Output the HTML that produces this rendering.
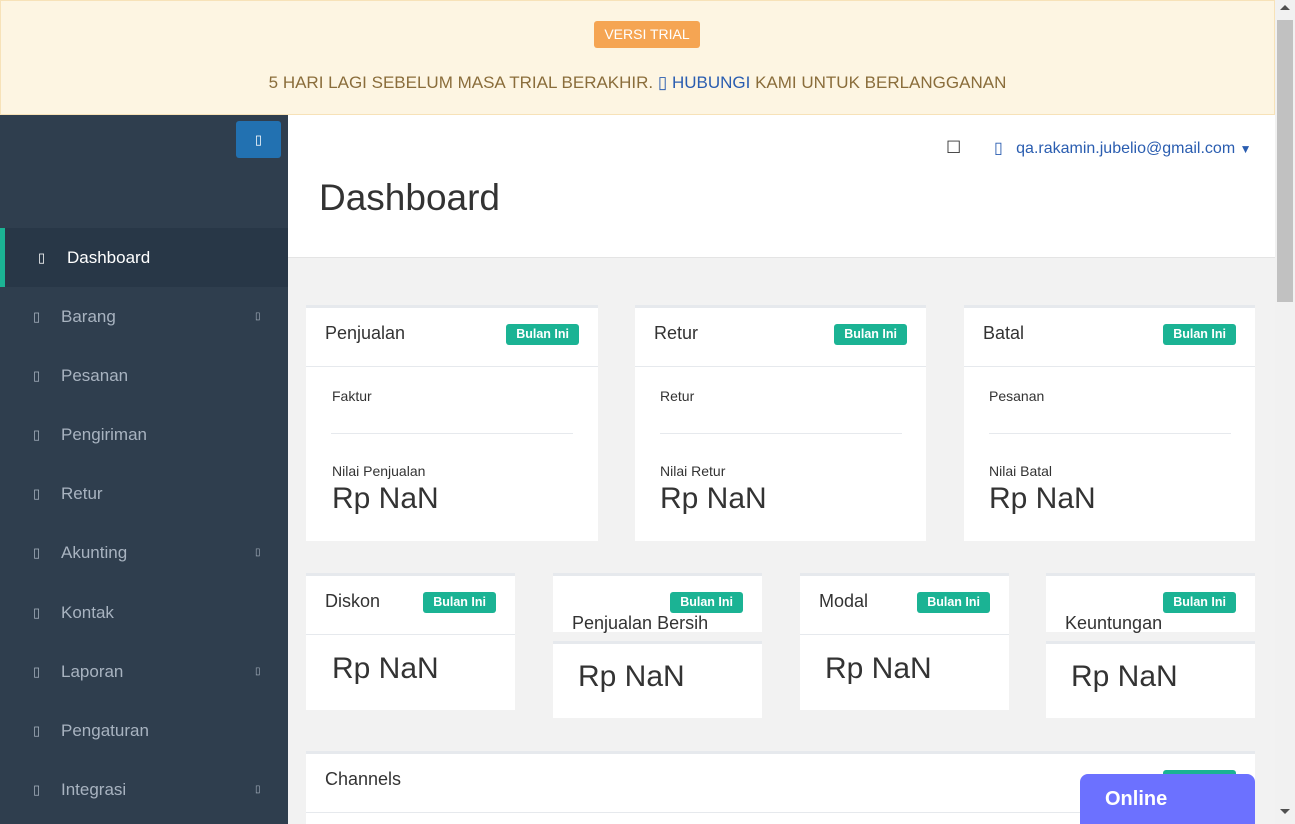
<!DOCTYPE html>
<html><head><meta charset="utf-8"><style>
*{box-sizing:border-box;margin:0;padding:0}
html,body{width:1295px;height:824px;overflow:hidden}
body{font-family:"Liberation Sans",sans-serif;background:#f2f2f2;position:relative}
.ban{position:absolute;left:0;top:0;width:1275px;height:115px;background:#fdf5e2;border:1px solid #f7e2b8;text-align:center}
.vt{position:absolute;left:593px;top:20px;width:106px;height:27px;background:#f5a553;color:#fff;font-size:14px;line-height:27px;border-radius:3px}
.bt{position:absolute;left:0;right:0;top:72px;font-size:17px;color:#8a6d3b}
.bt span{color:#2a5db0}
.sb{position:absolute;left:0;top:115px;width:288px;height:709px;background:#2f3e4e}
.tog{position:absolute;left:236px;top:121px;width:45px;height:37px;background:#2271b1;border-radius:3px;color:#fff;font-size:13px;text-align:center;line-height:37px}
.nav{position:absolute;left:0;width:288px;height:59px;color:#a8b3c0;font-size:17px;line-height:59px}
.nav i{position:absolute;left:33px;font-style:normal;font-size:13px}
.nav b{position:absolute;left:61px;font-weight:normal}
.nav u{position:absolute;left:255px;text-decoration:none;font-size:10px}
.act{background:#283747;color:#fff;border-left:5px solid #1bb394}
.hd{position:absolute;left:288px;top:115px;width:987px;height:143px;background:#fff;border-bottom:1px solid #e4e4e4}
.card{position:absolute;background:#fff;border-top:3px solid #e6e9ed}
.ch{height:59px;border-bottom:1px solid #e6e9ed;position:relative;font-size:18px;color:#333;padding:15px 0 0 19px}
.bd{position:absolute;right:19px;top:16px;background:#1bb394;color:#fff;font-size:12.5px;font-weight:bold;padding:3px 10px;border-radius:3px;line-height:15px}
.lab{position:absolute;font-size:14px;color:#333}
.big{position:absolute;font-size:30px;color:#333}
.sc{position:absolute;left:1275px;top:0;width:20px;height:824px;background:#f1f1f1}
</style></head><body>
<div class="ban"><div class="vt">VERSI TRIAL</div><div class="bt">5 HARI LAGI SEBELUM MASA TRIAL BERAKHIR. <span>▯ HUBUNGI</span> KAMI UNTUK BERLANGGANAN</div></div>
<div class="sb"></div>
<div class="tog">▯</div>
<div class="nav act" style="top:228px"><i>▯</i><b style="left:62px">Dashboard</b></div>
<div class="nav" style="top:287px"><i>▯</i><b>Barang</b><u>▯</u></div>
<div class="nav" style="top:346px"><i>▯</i><b>Pesanan</b></div>
<div class="nav" style="top:405px"><i>▯</i><b>Pengiriman</b></div>
<div class="nav" style="top:464px"><i>▯</i><b>Retur</b></div>
<div class="nav" style="top:523px"><i>▯</i><b>Akunting</b><u>▯</u></div>
<div class="nav" style="top:583px"><i>▯</i><b>Kontak</b></div>
<div class="nav" style="top:642px"><i>▯</i><b>Laporan</b><u>▯</u></div>
<div class="nav" style="top:701px"><i>▯</i><b>Pengaturan</b></div>
<div class="nav" style="top:760px"><i>▯</i><b>Integrasi</b><u>▯</u></div>
<div class="hd">
<div style="position:absolute;left:658px;top:23px;font-size:17px;color:#333">☐</div>
<div style="position:absolute;left:706px;top:23px;font-size:16px;color:#2a5db0">▯ &nbsp;&nbsp;qa.rakamin.jubelio@gmail.com <span style="font-size:12px">▼</span></div>
<div style="position:absolute;left:31px;top:62px;font-size:37px;color:#333">Dashboard</div>
</div>

<div class="card" style="left:306px;top:305px;width:292px;height:236px"><div class="ch">Penjualan<span class="bd">Bulan Ini</span></div>
<div class="lab" style="left:26px;top:80px">Faktur</div><div style="position:absolute;left:25px;top:125px;width:242px;border-top:1px solid #e6e9ed"></div>
<div class="lab" style="left:26px;top:155px">Nilai Penjualan</div><div class="big" style="left:26px;top:174px">Rp NaN</div></div>
<div class="card" style="left:635px;top:305px;width:291px;height:236px"><div class="ch">Retur<span class="bd">Bulan Ini</span></div>
<div class="lab" style="left:25px;top:80px">Retur</div><div style="position:absolute;left:25px;top:125px;width:242px;border-top:1px solid #e6e9ed"></div>
<div class="lab" style="left:25px;top:155px">Nilai Retur</div><div class="big" style="left:25px;top:174px">Rp NaN</div></div>
<div class="card" style="left:964px;top:305px;width:291px;height:236px"><div class="ch">Batal<span class="bd">Bulan Ini</span></div>
<div class="lab" style="left:25px;top:80px">Pesanan</div><div style="position:absolute;left:25px;top:125px;width:242px;border-top:1px solid #e6e9ed"></div>
<div class="lab" style="left:25px;top:155px">Nilai Batal</div><div class="big" style="left:25px;top:174px">Rp NaN</div></div>

<div class="card" style="left:306px;top:573px;width:209px;height:137px"><div class="ch">Diskon<span class="bd">Bulan Ini</span></div><div class="big" style="left:26px;top:76px">Rp NaN</div></div>
<div class="card" style="left:553px;top:573px;width:209px;height:59px"><span class="bd">Bulan Ini</span><div style="position:absolute;left:19px;top:37px;font-size:18px;color:#333">Penjualan Bersih</div></div>
<div class="card" style="left:553px;top:641px;width:209px;height:77px"><div class="big" style="left:25px;top:16px">Rp NaN</div></div>
<div class="card" style="left:800px;top:573px;width:209px;height:137px"><div class="ch">Modal<span class="bd">Bulan Ini</span></div><div class="big" style="left:25px;top:76px">Rp NaN</div></div>
<div class="card" style="left:1046px;top:573px;width:209px;height:59px"><span class="bd">Bulan Ini</span><div style="position:absolute;left:19px;top:37px;font-size:18px;color:#333">Keuntungan</div></div>
<div class="card" style="left:1046px;top:641px;width:209px;height:77px"><div class="big" style="left:25px;top:16px">Rp NaN</div></div>

<div class="card" style="left:306px;top:751px;width:949px;height:73px"><div class="ch">Channels<span class="bd">Bulan Ini</span></div></div>
<div style="position:absolute;left:1080px;top:774px;width:175px;height:50px;background:#6c71ff;border-radius:8px 8px 0 0;color:#fff;font-weight:bold;font-size:20px;padding:14px 0 0 25px">Online</div>
<div class="sc"><div style="position:absolute;left:2px;top:20px;width:16px;height:282px;background:#c1c1c1"></div>
<div style="position:absolute;left:5px;top:5px;border:5px solid transparent;border-bottom-color:#505050;border-top:none"></div>
<div style="position:absolute;left:5px;top:809px;border:5px solid transparent;border-top-color:#505050;border-bottom:none"></div></div>
</body></html>
